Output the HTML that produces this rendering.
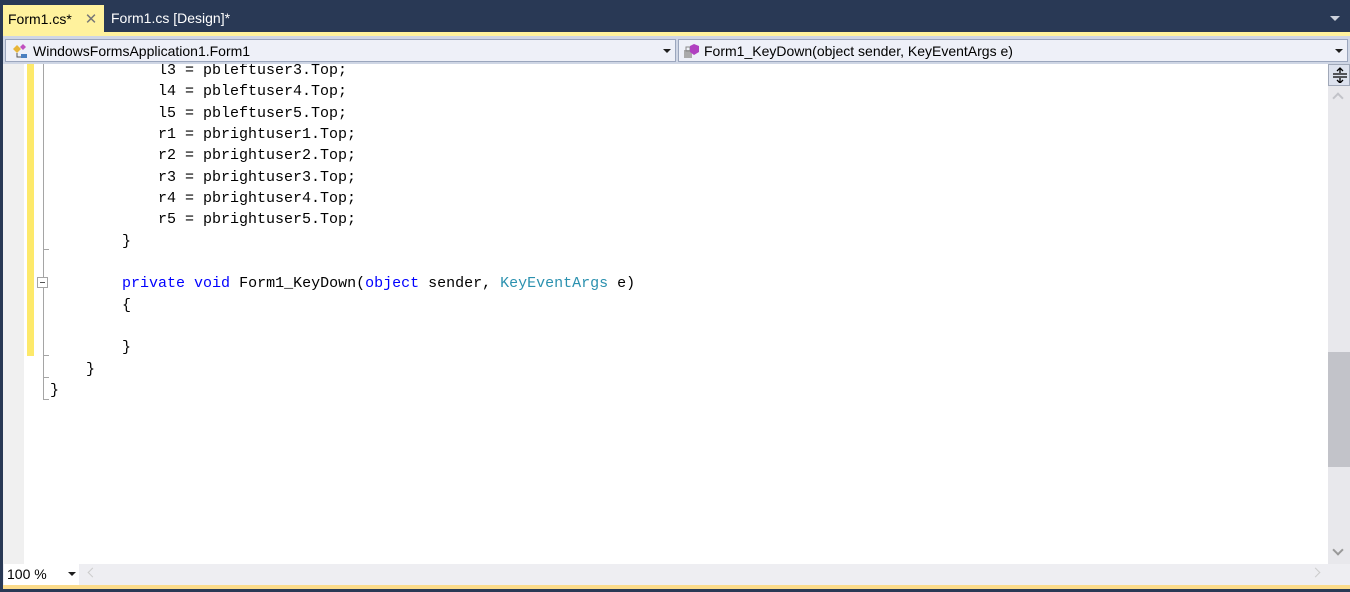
<!DOCTYPE html>
<html><head><meta charset="utf-8"><style>
*{margin:0;padding:0;box-sizing:border-box}
body{width:1350px;height:592px;background:#293955;position:relative;overflow:hidden;font-family:"Liberation Sans",sans-serif}
.abs{position:absolute}
.tab1{left:3px;top:5px;width:101px;height:28px;background:#fff29d;color:#000;font-size:14px;padding:5px 0 0 5px}
.tab2{left:111px;top:5px;color:#fff;font-size:14px;padding-top:5px}
.ystrip{left:3px;top:32px;width:1347px;height:4px;background:#fff29d}
.bar{left:3px;top:36px;width:1347px;height:28px;background:#cfd6e5}
.dd{top:39px;height:23px;background:#eef0f8;border:1px solid #9ba6bd;font-size:14px;padding:3px 0 0 27px;color:#000}
.tri{position:absolute;right:4px;top:9px;width:0;height:0;border-left:4px solid transparent;border-right:4px solid transparent;border-top:4px solid #1e1e1e}
.editor{left:3px;top:64px;width:1325px;height:500px;background:#fff;overflow:hidden}
.margin{left:0;top:0;width:21px;height:500px;background:#f0f0f0}
.chg{left:24px;top:0;width:7px;height:292px;background:#fde96a}
.code{left:47px;top:-4px;font-family:"Liberation Mono",monospace;font-size:15px;line-height:21.33px;white-space:pre;color:#000}
.k{color:#0000ff}.t{color:#2b91af}
.vsb{left:1328px;top:64px;width:22px;height:500px;background:#e8e8ec}
.bottom{left:3px;top:564px;width:1347px;height:21px;background:#eeeef2}
.bstrip{left:3px;top:585px;width:1347px;height:4px;background:#fbdb8a}
</style></head><body>
<div class="abs tab1">Form1.cs* <span style="color:#777;margin-left:9px;font-size:15px">✕</span></div>
<div class="abs tab2">Form1.cs [Design]*</div>
<div class="abs" style="right:10px;top:16px;width:0;height:0;border-left:5px solid transparent;border-right:5px solid transparent;border-top:5px solid #cdd2dc"></div>
<div class="abs ystrip"></div>
<div class="abs bar"></div>
<div class="abs dd" style="left:5px;width:671px">
<svg class="abs" style="left:5px;top:3px" width="20" height="16"><path d="M2 6l4-4 4 4-4 4z" fill="#e7b53a"/><path d="M9 4l3-3 3 3-3 3z" fill="#c050c0"/><path d="M10 11h6v4h-6z" fill="#4a7fc0"/><path d="M6 10v4h4" stroke="#555" fill="none"/></svg>WindowsFormsApplication1.Form1<div class="tri"></div></div>
<div class="abs dd" style="left:678px;width:670px;padding-left:25px">
<svg class="abs" style="left:3px;top:2px" width="22" height="18"><rect x="2" y="8" width="8" height="8" fill="#aaa"/><rect x="4" y="5" width="4" height="4" fill="none" stroke="#888"/><path d="M12 2l5 2v6l-5 3-4-3V4z" fill="#b040c0"/></svg>Form1_KeyDown(object sender, KeyEventArgs e)<div class="tri"></div></div>
<div class="abs editor">
<div class="abs margin"></div>
<div class="abs chg"></div>
<div class="abs" style="left:40px;top:0;width:1px;height:335px;background:#a5a5a5"></div>
<div class="abs" style="left:40px;top:185px;width:6px;height:1px;background:#a5a5a5"></div>
<div class="abs" style="left:34px;top:213px;width:11px;height:11px;border:1px solid #a5a5a5;background:#fff"><div style="position:absolute;left:2px;top:4px;width:5px;height:1px;background:#555"></div></div>
<div class="abs" style="left:40px;top:291px;width:6px;height:1px;background:#a5a5a5"></div>
<div class="abs" style="left:40px;top:313px;width:6px;height:1px;background:#a5a5a5"></div>
<div class="abs" style="left:40px;top:335px;width:6px;height:1px;background:#a5a5a5"></div>
<div class="abs code">            l3 = pbleftuser3.Top;
            l4 = pbleftuser4.Top;
            l5 = pbleftuser5.Top;
            r1 = pbrightuser1.Top;
            r2 = pbrightuser2.Top;
            r3 = pbrightuser3.Top;
            r4 = pbrightuser4.Top;
            r5 = pbrightuser5.Top;
        }

        <span class="k">private</span> <span class="k">void</span> Form1_KeyDown(<span class="k">object</span> sender, <span class="t">KeyEventArgs</span> e)
        {

        }
    }
}</div>
</div>
<div class="abs vsb">
<div class="abs" style="left:0;top:0;width:22px;height:22px;background:#dde2ee;border:1px solid #a0a8b8">
<svg class="abs" style="left:3px;top:2px" width="16" height="16"><path d="M1 7h14M1 10h14M8 1v5M8 11v5M5 4l3-3 3 3M5 13l3 3 3-3" stroke="#000" stroke-width="1.3" fill="none"/></svg></div>
<div class="abs" style="left:6px;top:30px;width:8px;height:8px;border-left:2px solid #c2c3c9;border-top:2px solid #c2c3c9;transform:rotate(45deg)"></div>
<div class="abs" style="left:0;top:288px;width:22px;height:115px;background:#c2c3c9"></div>
<div class="abs" style="left:6px;top:482px;width:8px;height:8px;border-right:2px solid #999;border-bottom:2px solid #999;transform:rotate(45deg)"></div>
</div>
<div class="abs bottom">
<div class="abs" style="left:1px;top:0;width:75px;height:21px;background:#fff;font-size:14px;padding:2px 0 0 3px">100 %<div class="tri" style="top:8px;right:3px"></div></div>
<div class="abs" style="left:86px;top:5px;width:7px;height:7px;border-left:1px solid #ccc;border-bottom:1px solid #ccc;transform:rotate(45deg)"></div>
<div class="abs" style="left:1309px;top:5px;width:7px;height:7px;border-right:1px solid #ccc;border-top:1px solid #ccc;transform:rotate(45deg)"></div>
</div>
<div class="abs bstrip"></div>
</body></html>
